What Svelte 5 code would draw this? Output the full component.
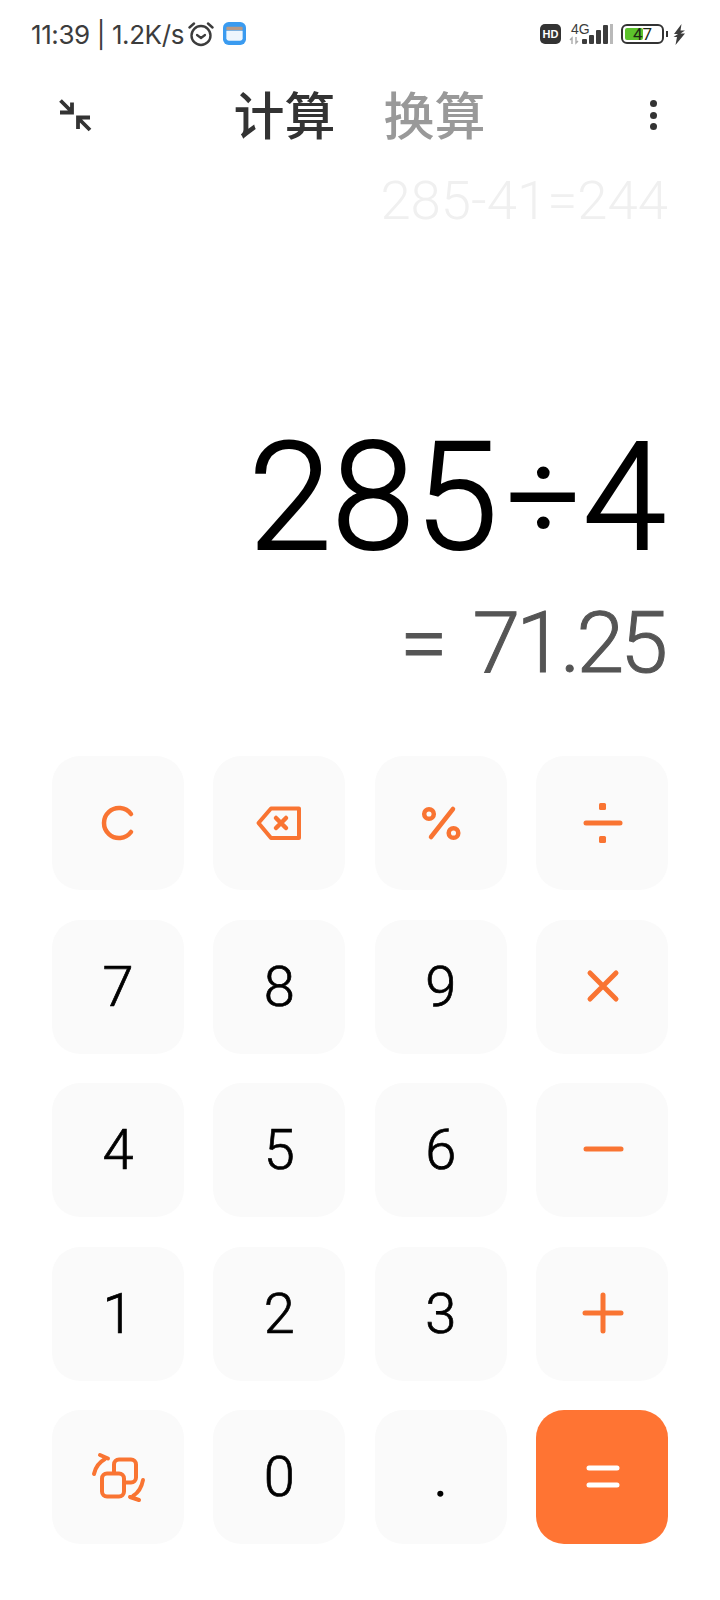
<script>
	const rows = [
		['7', '8', '9'],
		['4', '5', '6'],
		['1', '2', '3']
	];
	const opIcons = [
		'M54 53 L80 79 M80 53 L54 79',
		'M50 66 H85',
		'M49 66 H85 M67 48 V84'
	];
	const bars = [
		{ x: 13, h: 5 },
		{ x: 20, h: 9 },
		{ x: 27, h: 14 },
		{ x: 34, h: 19 }
	];
</script>

<div class="screen">
	<div class="status">
		<div class="status-left">
			<span class="clock">11:39 | 1.2K/s</span>
			<svg class="alarm" viewBox="0 0 26 26" width="26" height="26">
				<circle cx="13" cy="14.5" r="9.5" fill="none" stroke="#3c3c3c" stroke-width="2.4" />
				<path d="M9 14 L13 17 L17 14" fill="none" stroke="#3c3c3c" stroke-width="2.2" stroke-linecap="round" stroke-linejoin="round" />
				<path d="M1.5 6.5 L6 2.5 M24.5 6.5 L20 2.5" stroke="#3c3c3c" stroke-width="2.4" stroke-linecap="round" />
			</svg>
			<svg class="wallet" viewBox="0 0 24 24" width="23" height="23">
				<rect width="24" height="24" rx="6" fill="#3a9bf0" />
				<rect x="3.5" y="5" width="17" height="3.5" rx="1" fill="#b89a86" />
				<path d="M3.5 9 H20.5 V17 Q20.5 19.5 18 19.5 H6 Q3.5 19.5 3.5 17 Z" fill="#eef6fd" />
			</svg>
		</div>
		<div class="status-right">
			<span class="hd">HD</span>
			<svg class="signal" viewBox="0 0 44 30" width="44" height="30">
				<text x="2" y="15" class="net">4G</text>
				<path d="M3 25 V19 L1 21 M7 18 V24 L9 22" fill="none" stroke="#aaa" stroke-width="1.4" />
				{#each bars as bar}
					<rect x={bar.x} y={25 - bar.h} width="5" height={bar.h} rx="1" fill="#3c3c3c" />
				{/each}
				<rect x="41" y="5" width="3" height="20" fill="#b9b9b9" />
			</svg>
			<div class="battery">
				<span class="level"></span>
				<span class="pct">47</span>
			</div>
			<span class="nub"></span>
			<svg viewBox="0 0 13 21" width="13" height="21">
				<path d="M8.5 0 L1 10 H5 L0.5 13 L4 13 L2.5 21 L12 9.5 H7.5 L12 6.5 H7.5 Z" fill="#3c3c3c" />
			</svg>
		</div>
	</div>

	<div class="header">
		<svg class="collapse" viewBox="0 0 34 34" width="34" height="34">
			<path d="M2.5 2.5 L14 14 M14 4.5 V14.5 H2 M32 32 L20 20 M20 31 V19.5 H32" fill="none" stroke="#333" stroke-width="3.8" />
		</svg>
		<div class="tabs">
			<span class="tab active">计算</span>
			<span class="tab">换算</span>
		</div>
		<div class="more">
			<span></span><span></span><span></span>
		</div>
	</div>

	<div class="history">285-41=244</div>
	<div class="expression">285<span class="divide">÷</span>4</div>
	<div class="result">= 71.25</div>

	<div class="keypad">
		<button class="key">
			<svg viewBox="0 0 132 134"><path d="M79 58 A15 15 0 1 0 79 76" class="stroke" /></svg>
		</button>
		<button class="key">
			<svg viewBox="0 0 132 134">
				<path d="M45.5 67 L58 52.5 H86 V82 H58 Z" class="stroke thin" />
				<path d="M63 62 L73 72 M73 62 L63 72" class="stroke" />
			</svg>
		</button>
		<button class="key">
			<svg viewBox="0 0 132 134">
				<circle cx="54" cy="58" r="4.8" class="stroke" />
				<circle cx="78.5" cy="77" r="4.8" class="stroke" />
				<path d="M78 53 L56 81" class="stroke" />
			</svg>
		</button>
		<button class="key">
			<svg viewBox="0 0 132 134">
				<path d="M50 67 H84" class="stroke bar" />
				<rect x="63" y="47" width="7" height="7" rx="1.5" class="dot" />
				<rect x="63" y="80" width="7" height="7" rx="1.5" class="dot" />
			</svg>
		</button>

		{#each rows as row, i}
			{#each row as digit}
				<button class="key">{digit}</button>
			{/each}
			<button class="key">
				<svg viewBox="0 0 132 134"><path d={opIcons[i]} class="stroke bar" /></svg>
			</button>
		{/each}

		<button class="key">
			<svg viewBox="0 0 132 134">
				<rect x="62" y="49.5" width="22" height="23" rx="5" class="stroke thin" />
				<rect x="50" y="63.5" width="22" height="23" rx="5" class="stroke thin paper" />
				<path d="M42 64 Q44 54 53 49 M48 45 L56 48.5 M91 70 Q89 81 81 86 M87 90 L78 87" class="stroke thin" />
			</svg>
		</button>
		<button class="key">0</button>
		<button class="key point">.</button>
		<button class="key equals">
			<svg viewBox="0 0 132 134"><path d="M53 58 H81 M53 75 H81" class="stroke bar white" /></svg>
		</button>
	</div>
</div>

<style>
	:global(body) {
		margin: 0;
		background: #fff;
	}

	.screen {
		width: 720px;
		height: 1600px;
		overflow: hidden;
		font-family: Roboto, "Noto Sans CJK SC", sans-serif;
		color: #000;
	}

	.status {
		height: 68px;
		padding: 0 34px 0 31px;
		display: flex;
		justify-content: space-between;
		align-items: center;
		color: #3c3c3c;
	}

	.status-left,
	.status-right {
		display: flex;
		align-items: center;
	}

	.clock {
		font-family: Inter, sans-serif;
		font-size: 26px;
		letter-spacing: -0.4px;
	}

	.alarm {
		margin-left: 4px;
	}

	.wallet {
		margin-left: 9px;
		margin-top: -1px;
	}

	.hd {
		width: 21px;
		height: 20px;
		line-height: 20px;
		background: #333;
		border-radius: 5px;
		color: #fff;
		font-family: "Liberation Sans", sans-serif;
		font-weight: 700;
		font-size: 11px;
		text-align: center;
	}

	.signal {
		margin-left: 8px;
	}

	.net {
		font-family: "Liberation Sans", sans-serif;
		font-size: 14px;
		fill: #3c3c3c;
	}

	.battery {
		position: relative;
		box-sizing: border-box;
		width: 43px;
		height: 20px;
		margin-left: 8px;
		border: 2px solid #333;
		border-radius: 6px;
	}

	.level {
		position: absolute;
		left: 2px;
		top: 2px;
		bottom: 2px;
		width: 18px;
		background: #5cc22c;
		border-radius: 2px;
	}

	.pct {
		position: absolute;
		inset: 0;
		text-align: center;
		font-size: 17px;
		line-height: 16px;
		color: #1c2a14;
	}

	.nub {
		width: 2px;
		height: 6px;
		margin: 0 5px 0 2px;
		background: #333;
	}

	.header {
		height: 94px;
		padding: 0 63px 0 58px;
		display: flex;
		align-items: center;
		justify-content: space-between;
	}

	.tabs {
		display: flex;
		gap: 48px;
		margin-left: -23px;
		padding-top: 6px;
	}

	.tab {
		font-size: 51px;
		line-height: 60px;
		font-weight: 500;
		color: #999;
	}

	.tab.active {
		color: #333;
	}

	.more {
		display: flex;
		flex-direction: column;
		gap: 4.5px;
	}

	.more span {
		width: 7px;
		height: 7px;
		border-radius: 50%;
		background: #333;
	}

	.history,
	.expression,
	.result {
		text-align: right;
		padding-right: 52px;
	}

	.history {
		font-size: 54.5px;
		line-height: 64px;
		font-weight: 300;
		color: #f0f0f0;
		margin-top: 6px;
	}

	.expression {
		font-size: 150px;
		line-height: 170px;
		font-weight: 300;
		-webkit-text-stroke: 2px #000;
		margin-top: 180px;
		padding-right: 54px;
	}

	.divide {
		font-size: 128px;
		margin: 0 3px 0 9px;
		vertical-align: 8px;
	}

	.result {
		font-size: 86px;
		line-height: 104px;
		font-weight: 300;
		-webkit-text-stroke: 1px #555;
		letter-spacing: -4px;
		word-spacing: 12px;
		color: #555;
		margin-top: 8px;
		padding-right: 56px;
	}

	.keypad {
		position: absolute;
		top: 756px;
		left: 52px;
		width: 616px;
		display: grid;
		grid-template-columns: repeat(4, 1fr);
		grid-auto-rows: 134px;
		column-gap: 29.33px;
		row-gap: 29.5px;
	}

	.key {
		padding: 0;
		border: none;
		background: #fafafa;
		border-radius: 28px;
		font-family: Roboto, sans-serif;
		font-size: 56px;
		font-weight: 300;
		-webkit-text-stroke: 0.7px #000;
		color: #000;
	}

	.key.point {
		-webkit-text-stroke: 1.5px #000;
	}

	.key svg {
		display: block;
		width: 100%;
		height: 100%;
	}

	.key.equals {
		background: #ff7433;
	}

	.stroke {
		fill: none;
		stroke: #f97432;
		stroke-width: 4.5;
		stroke-linecap: round;
		stroke-linejoin: round;
	}

	.thin {
		stroke-width: 4;
	}

	.paper {
		fill: #fafafa;
	}

	.bar {
		stroke-width: 5;
	}

	.white {
		stroke: #fff;
	}

	.dot {
		fill: #f97432;
	}
</style>
